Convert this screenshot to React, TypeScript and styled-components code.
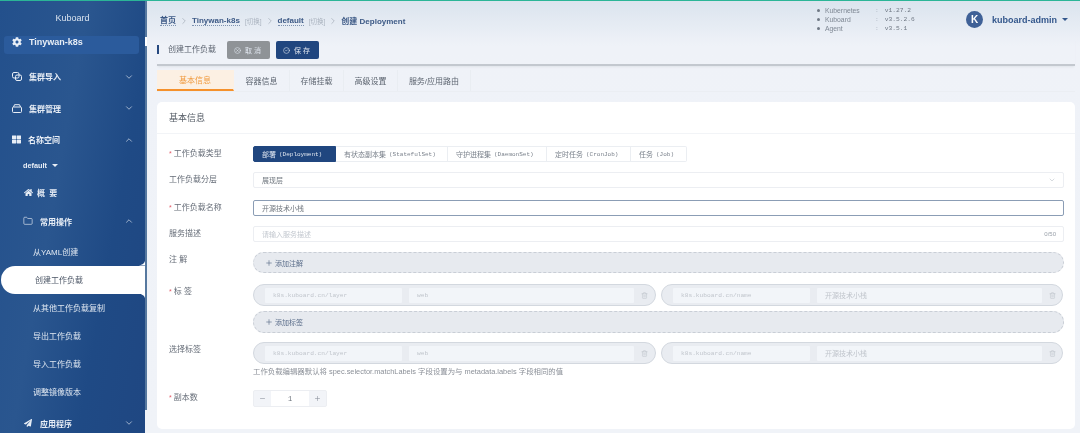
import styled, { createGlobalStyle } from "styled-components";
import { ChevronDown, ChevronRight, ChevronUp, CircleCheck, CircleX, Folder, Minus, Plus, Trash2 } from "lucide-react";
import { FaCog, FaHome, FaPaperPlane, FaThLarge } from "react-icons/fa";

const GlobalStyle = createGlobalStyle`
  html, body { margin: 0; padding: 0; width: 1080px; height: 433px; overflow: hidden; }
  body { font-family: "Liberation Sans", "Noto Sans CJK SC", sans-serif; }
  * { box-sizing: border-box; }
`;

const mono = `"Liberation Mono", "DejaVu Sans Mono", "Noto Sans CJK SC", monospace`;

const Page = styled.div`
  width: 1080px;
  height: 433px;
  display: flex;
  overflow: hidden;
  border-top: 1px solid #2bb597;
  background: linear-gradient(#dbe4ee 0, #eff2f8 45px, #f0f3f8 100%);
  filter: blur(0.4px);
`;

const Sidebar = styled.aside`
  width: 145px;
  flex: none;
  height: 432px;
  overflow: hidden;
  color: #e8eef6;
  background: linear-gradient(100deg, #23508c 0, #2a568f 40%, #1f4a85 70%, #1f4782 100%);
`;

const Rail = styled.div`
  width: 2px;
  height: 409px;
  flex: none;
  padding-top: 36px;
  background: #56789f;
`;

const RailKnob = styled.div`
  height: 9px;
  background: #fff;
`;

const Brand = styled.div`
  height: 35px;
  padding-top: 10px;
  text-align: center;
  font-size: 9px;
  line-height: 14px;
  color: #d9e3ef;
`;

const Cluster = styled.div`
  margin: 0 6px 7px 4px;
  height: 18px;
  display: flex;
  align-items: center;
  gap: 7px;
  padding: 0 0 6px 8px;
  border-radius: 3px;
  background: #2b5b9c;
  font-size: 9px;
  font-weight: 700;
`;

const NavRow = styled.div<{ $h?: number; $indent?: number; $gap?: number }>`
  height: ${({ $h }) => $h ?? 31.5}px;
  display: flex;
  align-items: center;
  gap: ${({ $gap }) => $gap ?? 7}px;
  padding-left: ${({ $indent }) => $indent ?? 12}px;
  padding-right: 11px;
  font-size: 8px;
  font-weight: 700;
`;

const NavLabel = styled.span<{ $spaced?: boolean }>`
  flex: 1;
  letter-spacing: ${({ $spaced }) => ($spaced ? "1px" : "0")};
`;

const DefaultRow = styled.div`
  height: 20px;
  display: flex;
  align-items: center;
  gap: 5px;
  padding-left: 23px;
  font-size: 7.3px;
  font-weight: 700;
`;

const Caret = styled.i`
  flex: none;
  width: 0;
  height: 0;
  border-left: 3px solid transparent;
  border-right: 3px solid transparent;
  border-top: 3px solid currentColor;
`;

const SubList = styled.div`
  padding-top: 4px;
`;

const SubItem = styled.div`
  height: 28px;
  display: flex;
  align-items: center;
  padding-left: 33px;
  font-size: 8px;
  color: #dfe7f1;
`;

const ActiveItem = styled.div`
  position: relative;
  height: 28px;
  margin-left: 1px;
  display: flex;
  align-items: center;
  padding-left: 34px;
  font-size: 8px;
  color: #4c5666;
  background: #fff;
  border-radius: 14px 0 0 14px;
  &::before, &::after {
    content: "";
    position: absolute;
    right: 0;
    width: 8px;
    height: 5px;
    background: #fff;
  }
  &::before { top: -5px; clip-path: path("M8 0V5H0C4 5 8 3 8 0Z"); }
  &::after { bottom: -5px; clip-path: path("M8 5V0H0C4 0 8 2 8 5Z"); }
`;

const Main = styled.main`
  flex: 1;
  min-width: 0;
  padding: 0 5px 0 10px;
`;

const TopBar = styled.header`
  height: 37px;
  display: flex;
  align-items: center;
`;

const Crumbs = styled.nav`
  flex: 1;
  display: flex;
  align-items: center;
  gap: 3px;
  padding: 3px 0 0 3px;
  font-size: 8px;
  font-weight: 700;
  color: #3d5a86;
`;

const Crumb = styled.span<{ $link?: boolean }>`
  border-bottom: ${({ $link }) => ($link ? "1px dotted #7d92b0" : "none")};
  line-height: 9px;
`;

const Switch = styled.span`
  font-size: 6.5px;
  font-weight: 400;
  color: #a9b2be;
  margin-left: 2px;
`;

const Versions = styled.div`
  display: grid;
  grid-template-columns: 4px 54px auto;
  column-gap: 4px;
  align-items: center;
  width: 149px;
  font-size: 6.8px;
  line-height: 9px;
  color: #7f8894;
`;

const Dot = styled.i`
  width: 3px;
  height: 3px;
  border-radius: 50%;
  background: #6f7884;
`;

const Version = styled.span`
  font-family: ${mono};
  font-size: 6.25px;
  color: #6f7884;
  &::before {
    content: ":";
    margin-right: 6px;
    margin-left: -8px;
    color: #a9b2be;
  }
`;

const User = styled.div`
  width: 109px;
  display: flex;
  align-items: center;
  gap: 5px;
  font-size: 9px;
  font-weight: 700;
  white-space: nowrap;
  color: #33578c;
`;

const Avatar = styled.span`
  flex: none;
  width: 17px;
  height: 17px;
  margin-right: 4px;
  border-radius: 50%;
  display: grid;
  place-items: center;
  background: #3f6197;
  color: #fff;
  font-size: 10px;
  font-weight: 700;
`;

const ToolBar = styled.div`
  height: 28px;
  display: flex;
  align-items: flex-start;
  gap: 6px;
  padding-top: 3px;
  border-bottom: 2px solid #c3c8cf;
  box-shadow: 0 2px 2px -1px #dfe3e9;
`;

const PageTitle = styled.div`
  width: 64px;
  margin-top: 4px;
  padding-left: 9px;
  font-size: 8px;
  line-height: 9px;
  white-space: nowrap;
  color: #5c6470;
  border-left: 2px solid #26497f;
`;

const ActionButton = styled.button<{ $primary?: boolean }>`
  width: 43px;
  height: 18px;
  padding: 0;
  border: 0;
  border-radius: 2px;
  display: flex;
  align-items: center;
  justify-content: center;
  gap: 4px;
  font: 7px "Liberation Sans", "Noto Sans CJK SC", sans-serif;
  letter-spacing: 2px;
  color: #dfe5ee;
  background: ${({ $primary }) => ($primary ? "#20467f" : "#8f9397")};
`;

const Tabs = styled.div`
  margin-top: 4px;
  display: flex;
  height: 22px;
  border-bottom: 1px solid #ebeef3;
`;

const Tab = styled.div<{ $active?: boolean; $w: number }>`
  width: ${({ $w }) => $w}px;
  display: grid;
  place-items: center;
  font-size: 8px;
  border-right: 1px solid ${({ $active }) => ($active ? "transparent" : "#e9edf2")};
  color: ${({ $active }) => ($active ? "#f09a3e" : "#5d6570")};
  background: ${({ $active }) => ($active ? "#fcf0e3" : "transparent")};
  border-bottom: ${({ $active }) => ($active ? "2px solid #f5912c" : "0")};
`;

const Card = styled.section`
  margin-top: 10px;
  height: 327px;
  width: 918px;
  background: #fff;
  border-radius: 5px;
`;

const CardTitle = styled.h2`
  margin: 0;
  height: 32px;
  padding-left: 12px;
  display: flex;
  align-items: center;
  font-size: 9px;
  font-weight: 400;
  color: #555c66;
  border-bottom: 1px solid #f2f4f7;
`;

const Form = styled.div`
  padding: 12px 11px 0 12px;
`;

const FormRow = styled.div<{ $mb: number }>`
  display: grid;
  grid-template-columns: 84px 1fr;
  margin-bottom: ${({ $mb }) => $mb}px;
`;

const Label = styled.label<{ $required?: boolean }>`
  font-size: 8px;
  line-height: 16px;
  color: #666d78;
  &::before {
    content: ${({ $required }) => ($required ? '"* "' : '""')};
    color: #e4606d;
    font-size: 7px;
  }
`;

const Segments = styled.div`
  display: flex;
  height: 16px;
`;

const Segment = styled.div<{ $active?: boolean; $w: number }>`
  width: ${({ $w }) => $w}px;
  display: flex;
  align-items: center;
  gap: 3px;
  padding-left: 8px;
  font-size: 7px;
  white-space: nowrap;
  color: ${({ $active }) => ($active ? "#dfe6f0" : "#7b828c")};
  background: ${({ $active }) => ($active ? "#20467f" : "#fff")};
  border: 1px solid ${({ $active }) => ($active ? "#20467f" : "#ebeef2")};
  border-left-width: ${({ $active }) => ($active ? 1 : 0)}px;
  border-radius: ${({ $active }) => ($active ? "2px 0 0 2px" : "0")};
  &:last-child { border-radius: 0 2px 2px 0; }
`;

const SegmentCode = styled.span`
  font-family: ${mono};
  font-size: 6px;
`;

const Field = styled.div<{ $focus?: boolean; $light?: boolean }>`
  height: 16px;
  display: flex;
  align-items: center;
  justify-content: space-between;
  padding: 0 7px 0 8px;
  font-size: 7px;
  color: ${({ $light }) => ($light ? "#c3c8cf" : "#70777f")};
  border: 1px solid ${({ $focus }) => ($focus ? "#8b9db5" : "#eceef2")};
  border-radius: 2px;
`;

const Counter = styled.span`
  font-size: 6px;
  color: #9aa1aa;
`;

const AddBar = styled.div<{ $h: number }>`
  height: ${({ $h }) => $h}px;
  display: flex;
  align-items: center;
  gap: 2px;
  padding-left: 11px;
  font-size: 7px;
  color: #5d6f8c;
  background: #e7eaef;
  border: 1px dashed #c9ced6;
  border-radius: 11px;
`;

const Pairs = styled.div`
  display: grid;
  grid-template-columns: 403px 402px;
  gap: 5px;
`;

const Capsule = styled.div`
  height: 22px;
  display: grid;
  grid-template-columns: 137px 225px 1fr;
  column-gap: 7px;
  align-items: center;
  padding-left: 11px;
  color: #c3c8cf;
  background: #e9ecf1;
  border: 1px solid #d3d8df;
  border-radius: 11px;
`;

const CapsuleInput = styled.div<{ $mono?: boolean }>`
  height: 15px;
  display: flex;
  align-items: center;
  padding-left: 8px;
  font-family: ${({ $mono }) => ($mono ? mono : "inherit")};
  font-size: ${({ $mono }) => ($mono ? 6.2 : 7)}px;
  color: #c0c5cc;
  background: #f2f5f9;
  border-radius: 1px;
`;

const Hint = styled.div`
  margin: 2px 0 12px 84px;
  font-size: 7.4px;
  line-height: 12px;
  color: #8b9098;
`;

const Stepper = styled.div`
  width: 74px;
  height: 17px;
  display: grid;
  grid-template-columns: 17px 1fr 17px;
  border: 1px solid #eceef2;
  border-radius: 2px;
  background: #f2f4f8;
  color: #8c939c;
`;

const StepButton = styled.span`
  display: grid;
  place-items: center;
`;

const StepValue = styled.span`
  display: grid;
  place-items: center;
  background: #fff;
  font-family: ${mono};
  font-size: 7px;
  color: #6c737c;
`;

const pair = (key: string, value: string, valueMono: boolean) => (
  <Capsule>
    <CapsuleInput $mono>{key}</CapsuleInput>
    <CapsuleInput $mono={valueMono}>{value}</CapsuleInput>
    <Trash2 size={7} strokeWidth={2} />
  </Capsule>
);

const Pair = () => (
  <Pairs>
    {pair("k8s.kuboard.cn/layer", "web", true)}
    {pair("k8s.kuboard.cn/name", "开源技术小栈", false)}
  </Pairs>
);

export default function App() {
  return (
    <>
      <GlobalStyle />
      <Page>
        <Sidebar>
          <Brand>Kuboard</Brand>
          <Cluster>
            <FaCog size={10} />
            Tinywan-k8s
          </Cluster>
          <NavRow>
            <ClusterImportIcon />
            <NavLabel>集群导入</NavLabel>
            <ChevronDown size={10} strokeWidth={1.5} />
          </NavRow>
          <NavRow>
            <ClusterManageIcon />
            <NavLabel>集群管理</NavLabel>
            <ChevronDown size={10} strokeWidth={1.5} />
          </NavRow>
          <NavRow>
            <FaThLarge size={9} />
            <NavLabel>名称空间</NavLabel>
            <ChevronUp size={10} strokeWidth={1.5} />
          </NavRow>
          <DefaultRow>
            default <Caret />
          </DefaultRow>
          <NavRow $h={33} $indent={24} $gap={4}>
            <FaHome size={9} />
            <NavLabel $spaced>概 要</NavLabel>
          </NavRow>
          <NavRow $h={25} $indent={23}>
            <Folder size={10} strokeWidth={1.5} />
            <NavLabel>常用操作</NavLabel>
            <ChevronUp size={10} strokeWidth={1.5} />
          </NavRow>
          <SubList>
            <SubItem>从YAML创建</SubItem>
            <ActiveItem>创建工作负载</ActiveItem>
            <SubItem>从其他工作负载复制</SubItem>
            <SubItem>导出工作负载</SubItem>
            <SubItem>导入工作负载</SubItem>
            <SubItem>调整镜像版本</SubItem>
          </SubList>
          <NavRow $h={35} $indent={24} $gap={8}>
            <FaPaperPlane size={8} />
            <NavLabel>应用程序</NavLabel>
            <ChevronDown size={10} strokeWidth={1.5} />
          </NavRow>
        </Sidebar>
        <Rail>
          <RailKnob />
        </Rail>
        <Main>
          <TopBar>
            <Crumbs>
              <Crumb $link>首页</Crumb>
              <ChevronRight size={10} strokeWidth={1.5} color="#9aa3af" />
              <Crumb $link>Tinywan-k8s</Crumb>
              <Switch>[切换]</Switch>
              <ChevronRight size={10} strokeWidth={1.5} color="#9aa3af" />
              <Crumb $link>default</Crumb>
              <Switch>[切换]</Switch>
              <ChevronRight size={10} strokeWidth={1.5} color="#9aa3af" />
              <Crumb>创建 Deployment</Crumb>
            </Crumbs>
            <Versions>
              <Dot />
              <span>Kubernetes</span>
              <Version>v1.27.2</Version>
              <Dot />
              <span>Kuboard</span>
              <Version>v3.5.2.6</Version>
              <Dot />
              <span>Agent</span>
              <Version>v3.5.1</Version>
            </Versions>
            <User>
              <Avatar>K</Avatar>
              kuboard-admin
              <Caret />
            </User>
          </TopBar>
          <ToolBar>
            <PageTitle>创建工作负载</PageTitle>
            <ActionButton>
              <CircleX size={7} />
              取消
            </ActionButton>
            <ActionButton $primary>
              <CircleCheck size={7} />
              保存
            </ActionButton>
          </ToolBar>
          <Tabs>
            <Tab $active $w={77}>基本信息</Tab>
            <Tab $w={56}>容器信息</Tab>
            <Tab $w={54}>存储挂载</Tab>
            <Tab $w={54}>高级设置</Tab>
            <Tab $w={73}>服务/应用路由</Tab>
          </Tabs>
          <Card>
            <CardTitle>基本信息</CardTitle>
            <Form>
              <FormRow $mb={10}>
                <Label $required>工作负载类型</Label>
                <Segments>
                  <Segment $active $w={83}>部署<SegmentCode>(Deployment)</SegmentCode></Segment>
                  <Segment $w={112}>有状态副本集<SegmentCode>(StatefulSet)</SegmentCode></Segment>
                  <Segment $w={99}>守护进程集<SegmentCode>(DaemonSet)</SegmentCode></Segment>
                  <Segment $w={84}>定时任务<SegmentCode>(CronJob)</SegmentCode></Segment>
                  <Segment $w={56}>任务<SegmentCode>(Job)</SegmentCode></Segment>
                </Segments>
              </FormRow>
              <FormRow $mb={12}>
                <Label>工作负载分层</Label>
                <Field>
                  展现层
                  <ChevronDown size={8} color="#c3c8cf" />
                </Field>
              </FormRow>
              <FormRow $mb={10}>
                <Label $required>工作负载名称</Label>
                <Field $focus>开源技术小栈</Field>
              </FormRow>
              <FormRow $mb={10}>
                <Label>服务描述</Label>
                <Field $light>
                  请输入服务描述
                  <Counter>0/50</Counter>
                </Field>
              </FormRow>
              <FormRow $mb={11}>
                <Label>注 解</Label>
                <AddBar $h={21}>
                  <Plus size={8} />
                  添加注解
                </AddBar>
              </FormRow>
              <FormRow $mb={5}>
                <Label $required>标 签</Label>
                <Pair />
              </FormRow>
              <FormRow $mb={9}>
                <span />
                <AddBar $h={22}>
                  <Plus size={8} />
                  添加标签
                </AddBar>
              </FormRow>
              <FormRow $mb={0}>
                <Label>选择标签</Label>
                <Pair />
              </FormRow>
              <Hint>工作负载编辑器默认将 spec.selector.matchLabels 字段设置为与 metadata.labels 字段相同的值</Hint>
              <FormRow $mb={0}>
                <Label $required>副本数</Label>
                <Stepper>
                  <StepButton>
                    <Minus size={7} />
                  </StepButton>
                  <StepValue>1</StepValue>
                  <StepButton>
                    <Plus size={7} />
                  </StepButton>
                </Stepper>
              </FormRow>
            </Form>
          </Card>
        </Main>
      </Page>
    </>
  );
}

function ClusterImportIcon() {
  return (
    <svg width="10" height="9" viewBox="0 0 10 9" fill="none" stroke="currentColor" strokeWidth="1">
      <rect x="0.5" y="0.5" width="6.5" height="5.5" rx="1.5" />
      <rect x="3.5" y="3" width="6" height="5.5" rx="1.5" />
    </svg>
  );
}

function ClusterManageIcon() {
  return (
    <svg width="10" height="9" viewBox="0 0 10 9" fill="none" stroke="currentColor" strokeWidth="1">
      <path d="M1.5 3 2.5 .7h5L8.5 3" />
      <rect x="0.5" y="3" width="9" height="5.5" rx="1" />
    </svg>
  );
}
